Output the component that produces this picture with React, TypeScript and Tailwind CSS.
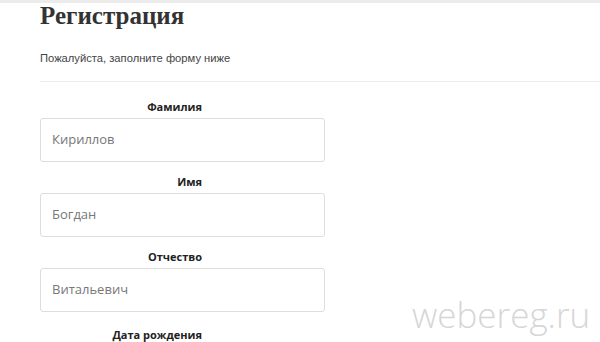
import React from 'react';

const fields = [
  { label: 'Фамилия', value: 'Кириллов' },
  { label: 'Имя', value: 'Богдан' },
  { label: 'Отчество', value: 'Витальевич' },
];

export default function App() {
  return (
    <div className="relative h-[342px] w-[600px] overflow-hidden bg-white">
      <div className="h-[3px] bg-[#ececec]" />
      <div className="pl-[40px]">
        <h1 className="mt-[-2px] text-[25px] font-bold leading-[30px] text-[#333] [font-family:'Liberation_Serif',serif]">
          Регистрация
        </h1>
        <p className="mt-[20px] text-[11.2px] leading-[14px] text-[#444] [font-family:'Liberation_Sans',sans-serif]">
          Пожалуйста, заполните форму ниже
        </p>
        <div className="mt-[16px] h-px bg-[#ececec]" />

        <div className="mt-[18px] flex flex-col [font-family:'Open_Sans',sans-serif]">
          {fields.map(f => (
            <div key={f.label} className="mb-[13px] flex flex-col">
              <label className="w-[162px] text-right text-[11px] font-bold leading-[14px] text-[#222]">
                {f.label}
              </label>
              <div className="mt-[4px] flex h-[44px] w-[285px] items-center rounded-[3px] border border-[#ddd] px-[11px] text-[13px] text-[#777]">
                {f.value}
              </div>
            </div>
          ))}
          <label className="mt-[3px] w-[162px] text-right text-[11px] font-bold leading-[14px] text-[#222]">
            Дата рождения
          </label>
        </div>
      </div>
      <div className="absolute left-[412px] top-[295px] text-[35px] font-light leading-[40px] text-[#d6d6d6] [font-family:'Open_Sans',sans-serif]">
        webereg.ru
      </div>
    </div>
  );
}
